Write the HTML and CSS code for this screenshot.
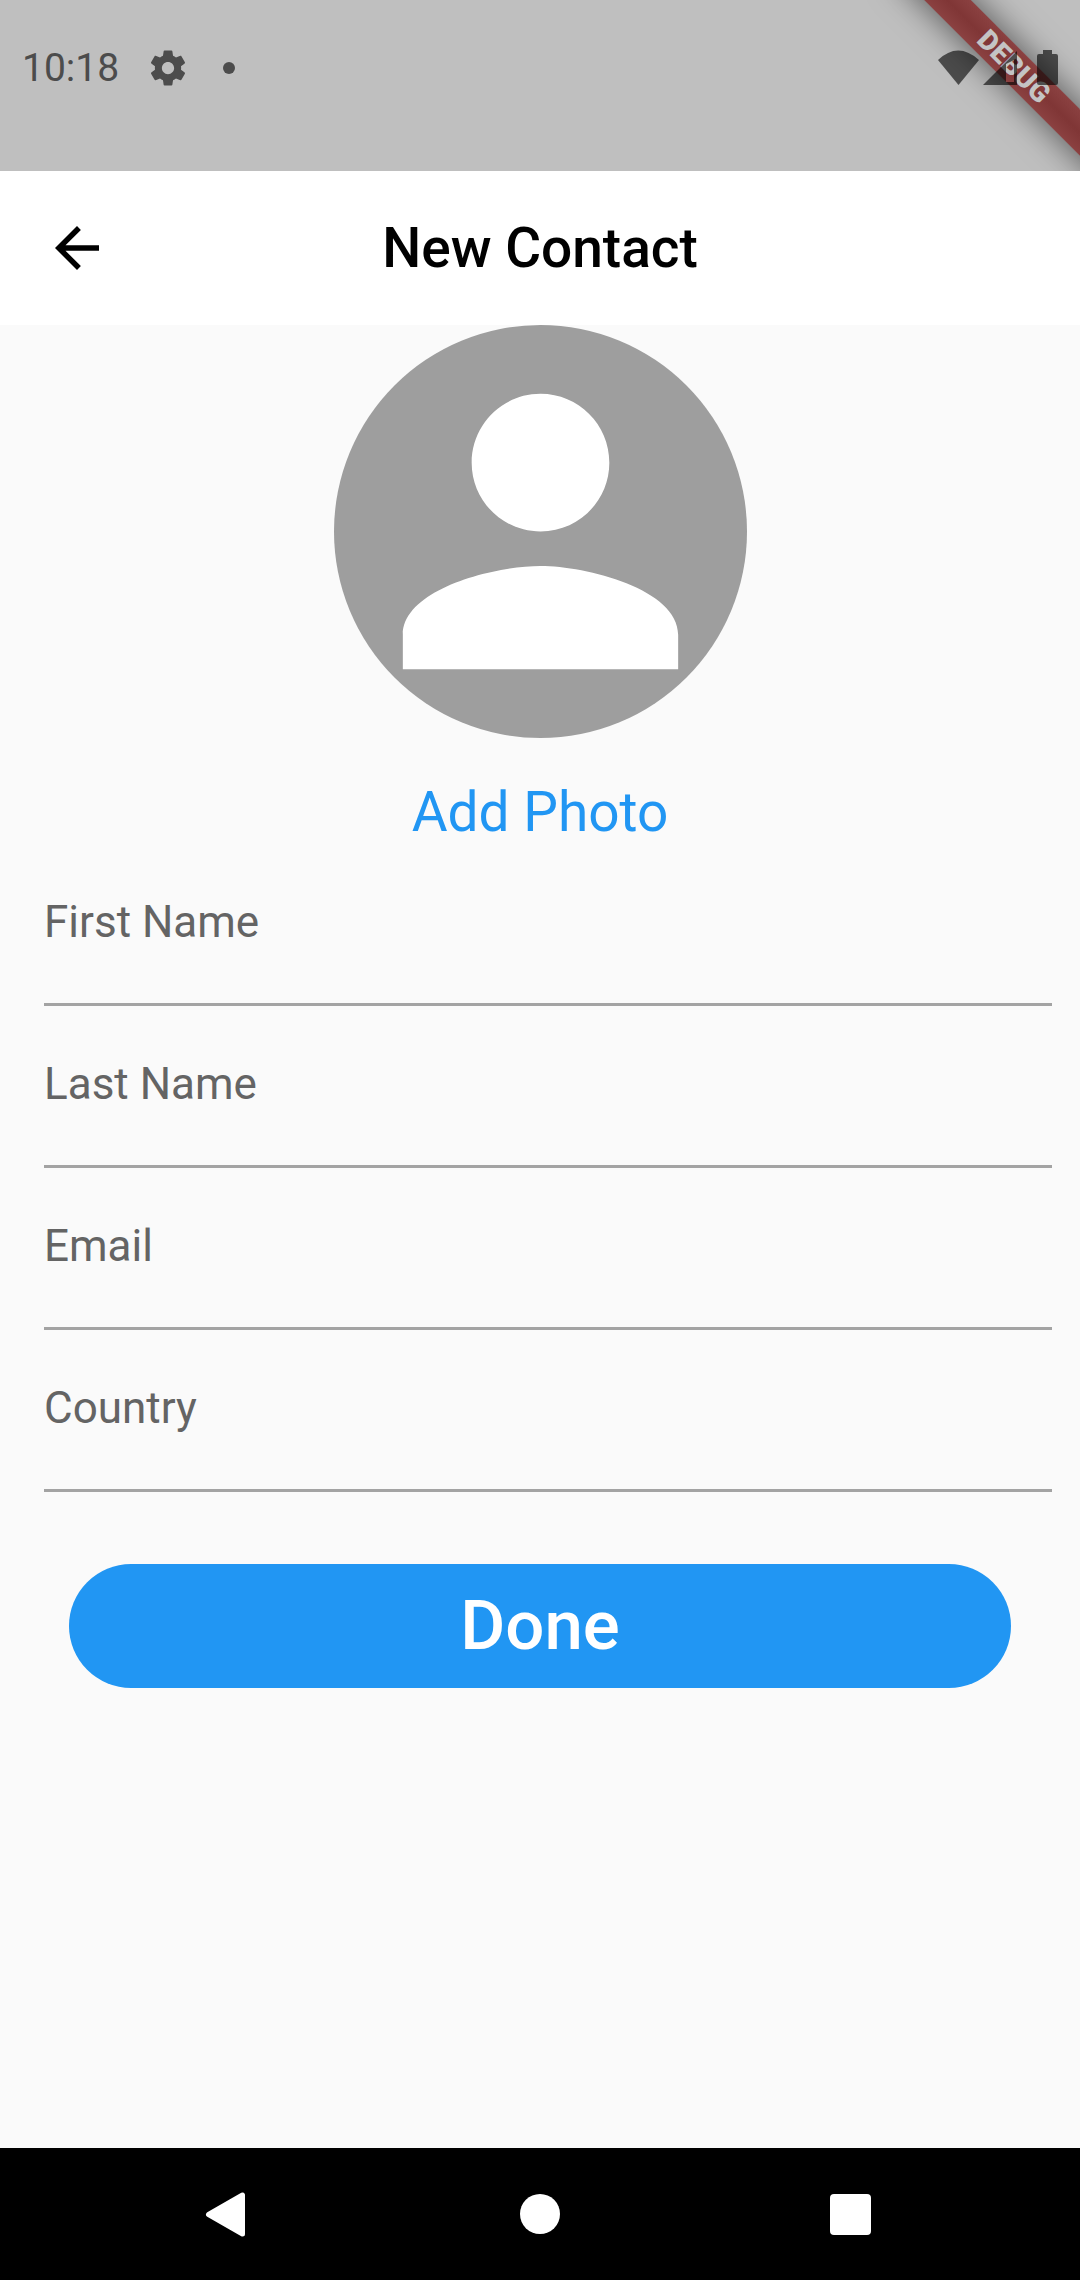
FILE: index.html
```html
<!DOCTYPE html>
<html lang="en">
<head>
<meta charset="utf-8">
<meta name="viewport" content="width=device-width, initial-scale=1">
<title>New Contact</title>
<link rel="stylesheet" href="styles.css">
</head>
<body>
<div class="screen">
  <div class="status-bar">
    <div class="debug-corner"><span class="debug-ribbon">DEBUG</span></div>
    <span class="clock">10:18</span>
    <svg class="gear" viewBox="0 0 24 24" aria-hidden="true"><path d="M19.43 12.98c.04-.32.07-.64.07-.98s-.03-.66-.07-.98l2.11-1.65c.19-.15.24-.42.12-.64l-2-3.46c-.12-.22-.39-.3-.61-.22l-2.49 1c-.52-.4-1.08-.73-1.69-.98l-.38-2.65C14.46 2.18 14.25 2 14 2h-4c-.25 0-.46.18-.49.42l-.38 2.65c-.61.25-1.17.59-1.69.98l-2.49-1c-.23-.09-.49 0-.61.22l-2 3.46c-.13.22-.07.49.12.64l2.11 1.65c-.04.32-.07.65-.07.98s.03.66.07.98l-2.11 1.65c-.19.15-.24.42-.12.64l2 3.46c.12.22.39.3.61.22l2.49-1c.52.4 1.08.73 1.69.98l.38 2.65c.03.24.24.42.49.42h4c.25 0 .46-.18.49-.42l.38-2.65c.61-.25 1.17-.59 1.69-.98l2.49 1c.23.09.49 0 .61-.22l2-3.46c.12-.22.07-.49-.12-.64l-2.11-1.65zM12 15.5c-1.93 0-3.5-1.57-3.5-3.5s1.57-3.5 3.5-3.5 3.5 1.57 3.5 3.5-1.57 3.5-3.5 3.5z"/></svg>
    <span class="dot"></span>
    <svg class="signals" viewBox="0 0 122 38" aria-hidden="true">
      <path d="M0 11Q20 -8 41 11L20.500 36Z"/>
      <path fill-rule="evenodd" d="M45 36L79 2V36ZM68 15V33H76V11Z"/>
      <path d="M105 1h9v4h4q2 0 2 2v27q0 2-2 2h-17q-2 0-2-2V7q0-2 2-2h4z"/>
    </svg>
  </div>

  <header class="app-bar">
    <button class="back" type="button" aria-label="Back">
      <svg viewBox="0 0 24 24" aria-hidden="true"><path d="M20 11H7.830l5.590-5.590L12 4l-8 8 8 8 1.410-1.410L7.830 13H20v-2z"/></svg>
    </button>
    <h1 class="title">New Contact</h1>
  </header>

  <main class="content">
    <svg class="avatar" viewBox="0 0 24 24" aria-hidden="true"><path d="M12 12c2.210 0 4-1.790 4-4s-1.790-4-4-4-4 1.790-4 4 1.790 4 4 4zm0 2c-2.670 0-8 1.340-8 4v2h16v-2c0-2.660-5.330-4-8-4z"/></svg>
    <button class="add-photo" type="button">Add Photo</button>
    <form class="form">
      <div class="field"><label for="first">First Name</label><input id="first" type="text"></div>
      <div class="field"><label for="last">Last Name</label><input id="last" type="text"></div>
      <div class="field"><label for="email">Email</label><input id="email" type="email"></div>
      <div class="field"><label for="country">Country</label><input id="country" type="text"></div>
      <button class="done" type="submit">Done</button>
    </form>
  </main>

  <nav class="nav-bar" aria-label="System">
    <button type="button" aria-label="Back"><svg viewBox="0 0 48 48"><path d="M38.500 5V44L4.500 24.500Z" stroke-width="5" class="rounded"/></svg></button>
    <button type="button" aria-label="Home"><svg viewBox="0 0 48 48"><circle cx="24" cy="24" r="20"/></svg></button>
    <button type="button" aria-label="Recents"><svg viewBox="0 0 48 48"><rect x="2" y="4" width="41" height="41" rx="4"/></svg></button>
  </nav>
</div>
</body>
</html>
```
FILE: styles.css
```css
* {
  box-sizing: border-box;
}

body {
  margin: 0;
  background: #fafafa;
  font-family: Roboto, "Liberation Sans", sans-serif;
}

button {
  padding: 0;
  border: 0;
  background: none;
  font: inherit;
  cursor: pointer;
}

svg {
  display: block;
}

.screen {
  display: flex;
  flex-direction: column;
  min-height: 100vh;
}

/* System status bar */
.status-bar {
  position: relative;
  display: flex;
  align-items: center;
  height: 171px;
  padding: 0 20px 36px 22px;
  background: #bfbfbf;
  color: #4c4c4c;
}

.clock {
  font-size: 39px;
  line-height: 46px;
}

.gear {
  width: 42px;
  height: 42px;
  margin-left: 28px;
  fill: #4c4c4c;
}

.dot {
  width: 12px;
  height: 12px;
  margin-left: 34px;
  border-radius: 50%;
  background: #4c4c4c;
}

/* Translucent, so the ribbon shows through the icons */
.signals {
  position: relative;
  width: 122px;
  height: 38px;
  margin-left: auto;
  fill: #000;
  opacity: 0.6;
}

/* Diagonal ribbon laid over the top right corner */
.debug-corner {
  position: absolute;
  top: 0;
  right: 0;
  width: 240px;
  height: 171px;
  overflow: hidden;
  pointer-events: none;
}

.debug-ribbon {
  position: absolute;
  top: 50px;
  right: -84px;
  width: 300px;
  height: 33px;
  background: linear-gradient(#8b4141, #803636, #8b4141);
  box-shadow: 0 0 34px rgba(0, 0, 0, 0.6);
  color: #c4c4c4;
  font-size: 28px;
  font-weight: 900;
  line-height: 33px;
  text-align: center;
  transform: rotate(45deg);
}

/* App bar */
.app-bar {
  display: grid;
  grid-template-columns: 154px 1fr 154px;
  align-items: center;
  height: 154px;
  background: #fff;
}

.back {
  display: grid;
  place-items: center;
  height: 154px;
}

.back svg {
  width: 66px;
  height: 66px;
}

.title {
  margin: 0;
  color: #000;
  font-size: 55px;
  font-weight: 500;
  line-height: 66px;
  text-align: center;
}

/* Contact form */
.content {
  display: flex;
  flex: 1;
  flex-direction: column;
  align-items: center;
}

.avatar {
  width: 413px;
  height: 413px;
  border-radius: 50%;
  background: #9e9e9e;
  fill: #fff;
}

.add-photo {
  margin-top: 42px;
  color: #2196f3;
  font-size: 55px;
  line-height: 64px;
}

.form {
  display: flex;
  flex-direction: column;
  align-self: stretch;
}

.field {
  display: flex;
  flex-direction: column;
  height: 162px;
  margin: 0 28px 0 44px;
  padding-top: 52px;
  border-bottom: 3px solid #a3a3a3;
}

.field label {
  color: #646464;
  font-size: 44px;
  line-height: 52px;
}

.field input {
  width: 100%;
  height: 55px;
  padding: 0;
  border: 0;
  outline: 0;
  background: transparent;
  font: inherit;
  font-size: 44px;
}

.done {
  height: 124px;
  margin: 72px 69px 48px;
  border-radius: 62px;
  background: #2196f3;
  color: #fff;
  font-size: 69px;
  font-weight: 500;
  line-height: 80px;
}

/* System navigation */
.nav-bar {
  display: flex;
  align-items: center;
  justify-content: space-around;
  height: 132px;
  padding: 0 72px;
  background: #000;
}

.nav-bar svg {
  width: 48px;
  height: 48px;
  fill: #fff;
}

.rounded {
  stroke: #fff;
  stroke-linejoin: round;
}
```
